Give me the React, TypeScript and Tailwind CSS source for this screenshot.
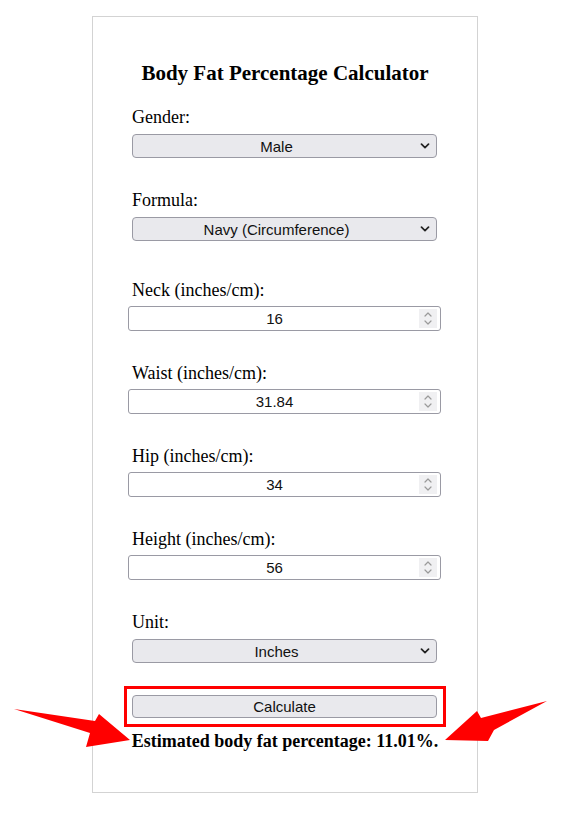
import React from "react";

const serif = { fontFamily: '"Liberation Serif", "Times New Roman", serif' };
const sans = { fontFamily: '"Liberation Sans", Arial, sans-serif' };

function Chevron() {
  return (
    <svg width="10" height="6" viewBox="0 0 10 6" className="absolute right-[6px] top-1/2 -translate-y-1/2">
      <path d="M1.5 1.2 L5 4.6 L8.5 1.2" fill="none" stroke="#222" strokeWidth="1.7" strokeLinecap="round" strokeLinejoin="round" />
    </svg>
  );
}

function SelectBox({ value, className = "" }: { value: string; className?: string }) {
  return (
    <div
      className={`relative h-[24px] w-[305px] rounded-[4px] border border-[#9a9aa4] bg-[#e9e9ed] ${className}`}
      style={sans}
    >
      <div className="flex h-full items-center justify-center pr-[16px] text-[15px] leading-none text-[#111]">{value}</div>
      <Chevron />
    </div>
  );
}

function NumberBox({ value, className = "" }: { value: string; className?: string }) {
  return (
    <div
      className={`relative -ml-[4px] h-[25px] w-[313px] rounded-[3px] border border-[#9a9aa4] bg-white ${className}`}
      style={sans}
    >
      <div className="flex h-full items-center justify-center pr-[20px] text-[15px] leading-none text-[#111]">{value}</div>
      <div className="absolute right-[3px] top-[2px] bottom-[2px] flex w-[18px] flex-col items-center justify-center gap-[3px] bg-[#f0f0f2]">
        <svg width="8" height="5" viewBox="0 0 8 5">
          <path d="M1 4 L4 1 L7 4" fill="none" stroke="#9a9a9a" strokeWidth="1.2" strokeLinecap="round" strokeLinejoin="round" />
        </svg>
        <svg width="8" height="5" viewBox="0 0 8 5">
          <path d="M1 1 L4 4 L7 1" fill="none" stroke="#9a9a9a" strokeWidth="1.2" strokeLinecap="round" strokeLinejoin="round" />
        </svg>
      </div>
    </div>
  );
}

function Label({ text, className = "" }: { text: string; className?: string }) {
  return (
    <div className={`text-[18px] leading-[20px] text-black ${className}`} style={serif}>
      {text}
    </div>
  );
}

export default function App() {
  return (
    <div className="relative h-[813px] w-[562px] overflow-hidden bg-white">
      <div className="ml-[92px] mt-[16px] h-[777px] w-[386px] border border-[#d3d3d3]">
        <h2
          className="mt-[44px] text-center text-[21px] font-bold leading-[24px] text-black"
          style={serif}
        >
          Body Fat Percentage Calculator
        </h2>
        <div className="ml-[39px] flex w-[305px] flex-col">
          <Label text="Gender:" className="mt-[22px]" />
          <SelectBox value="Male" className="mt-[7px]" />
          <Label text="Formula:" className="mt-[32px]" />
          <SelectBox value="Navy (Circumference)" className="mt-[7px]" />
          <Label text="Neck (inches/cm):" className="mt-[39px]" />
          <NumberBox value="16" className="mt-[6px]" />
          <Label text="Waist (inches/cm):" className="mt-[32px]" />
          <NumberBox value="31.84" className="mt-[6px]" />
          <Label text="Hip (inches/cm):" className="mt-[32px]" />
          <NumberBox value="34" className="mt-[6px]" />
          <Label text="Height (inches/cm):" className="mt-[32px]" />
          <NumberBox value="56" className="mt-[6px]" />
          <Label text="Unit:" className="mt-[32px]" />
          <SelectBox value="Inches" className="mt-[7px]" />
          <div className="-ml-[8px] mt-[23px] w-[322px] border-[3px] border-[#ff0000] pb-[6px] pl-[5px] pr-[6px] pt-[6px]">
            <div
              className="flex h-[23px] w-[305px] items-center justify-center rounded-[4px] border border-[#9a9aa4] bg-[#e9e9ed] text-[15px] leading-none text-[#111]"
              style={sans}
            >
              Calculate
            </div>
          </div>
        </div>
        <div className="mt-[4px] text-center text-[18px] font-bold leading-[20px] text-black" style={serif}>
          Estimated body fat percentage: 11.01%.
        </div>
      </div>
      <svg
        className="pointer-events-none absolute left-0 top-0"
        width="562"
        height="813"
        viewBox="0 0 562 813"
      >
        <polygon points="14,709 95,721 99,714 130,740 86,747 90,733" fill="#ff0000" />
        <polygon points="547,701 481,718 477,711 445,740 488,741 494,730" fill="#ff0000" />
      </svg>
    </div>
  );
}
